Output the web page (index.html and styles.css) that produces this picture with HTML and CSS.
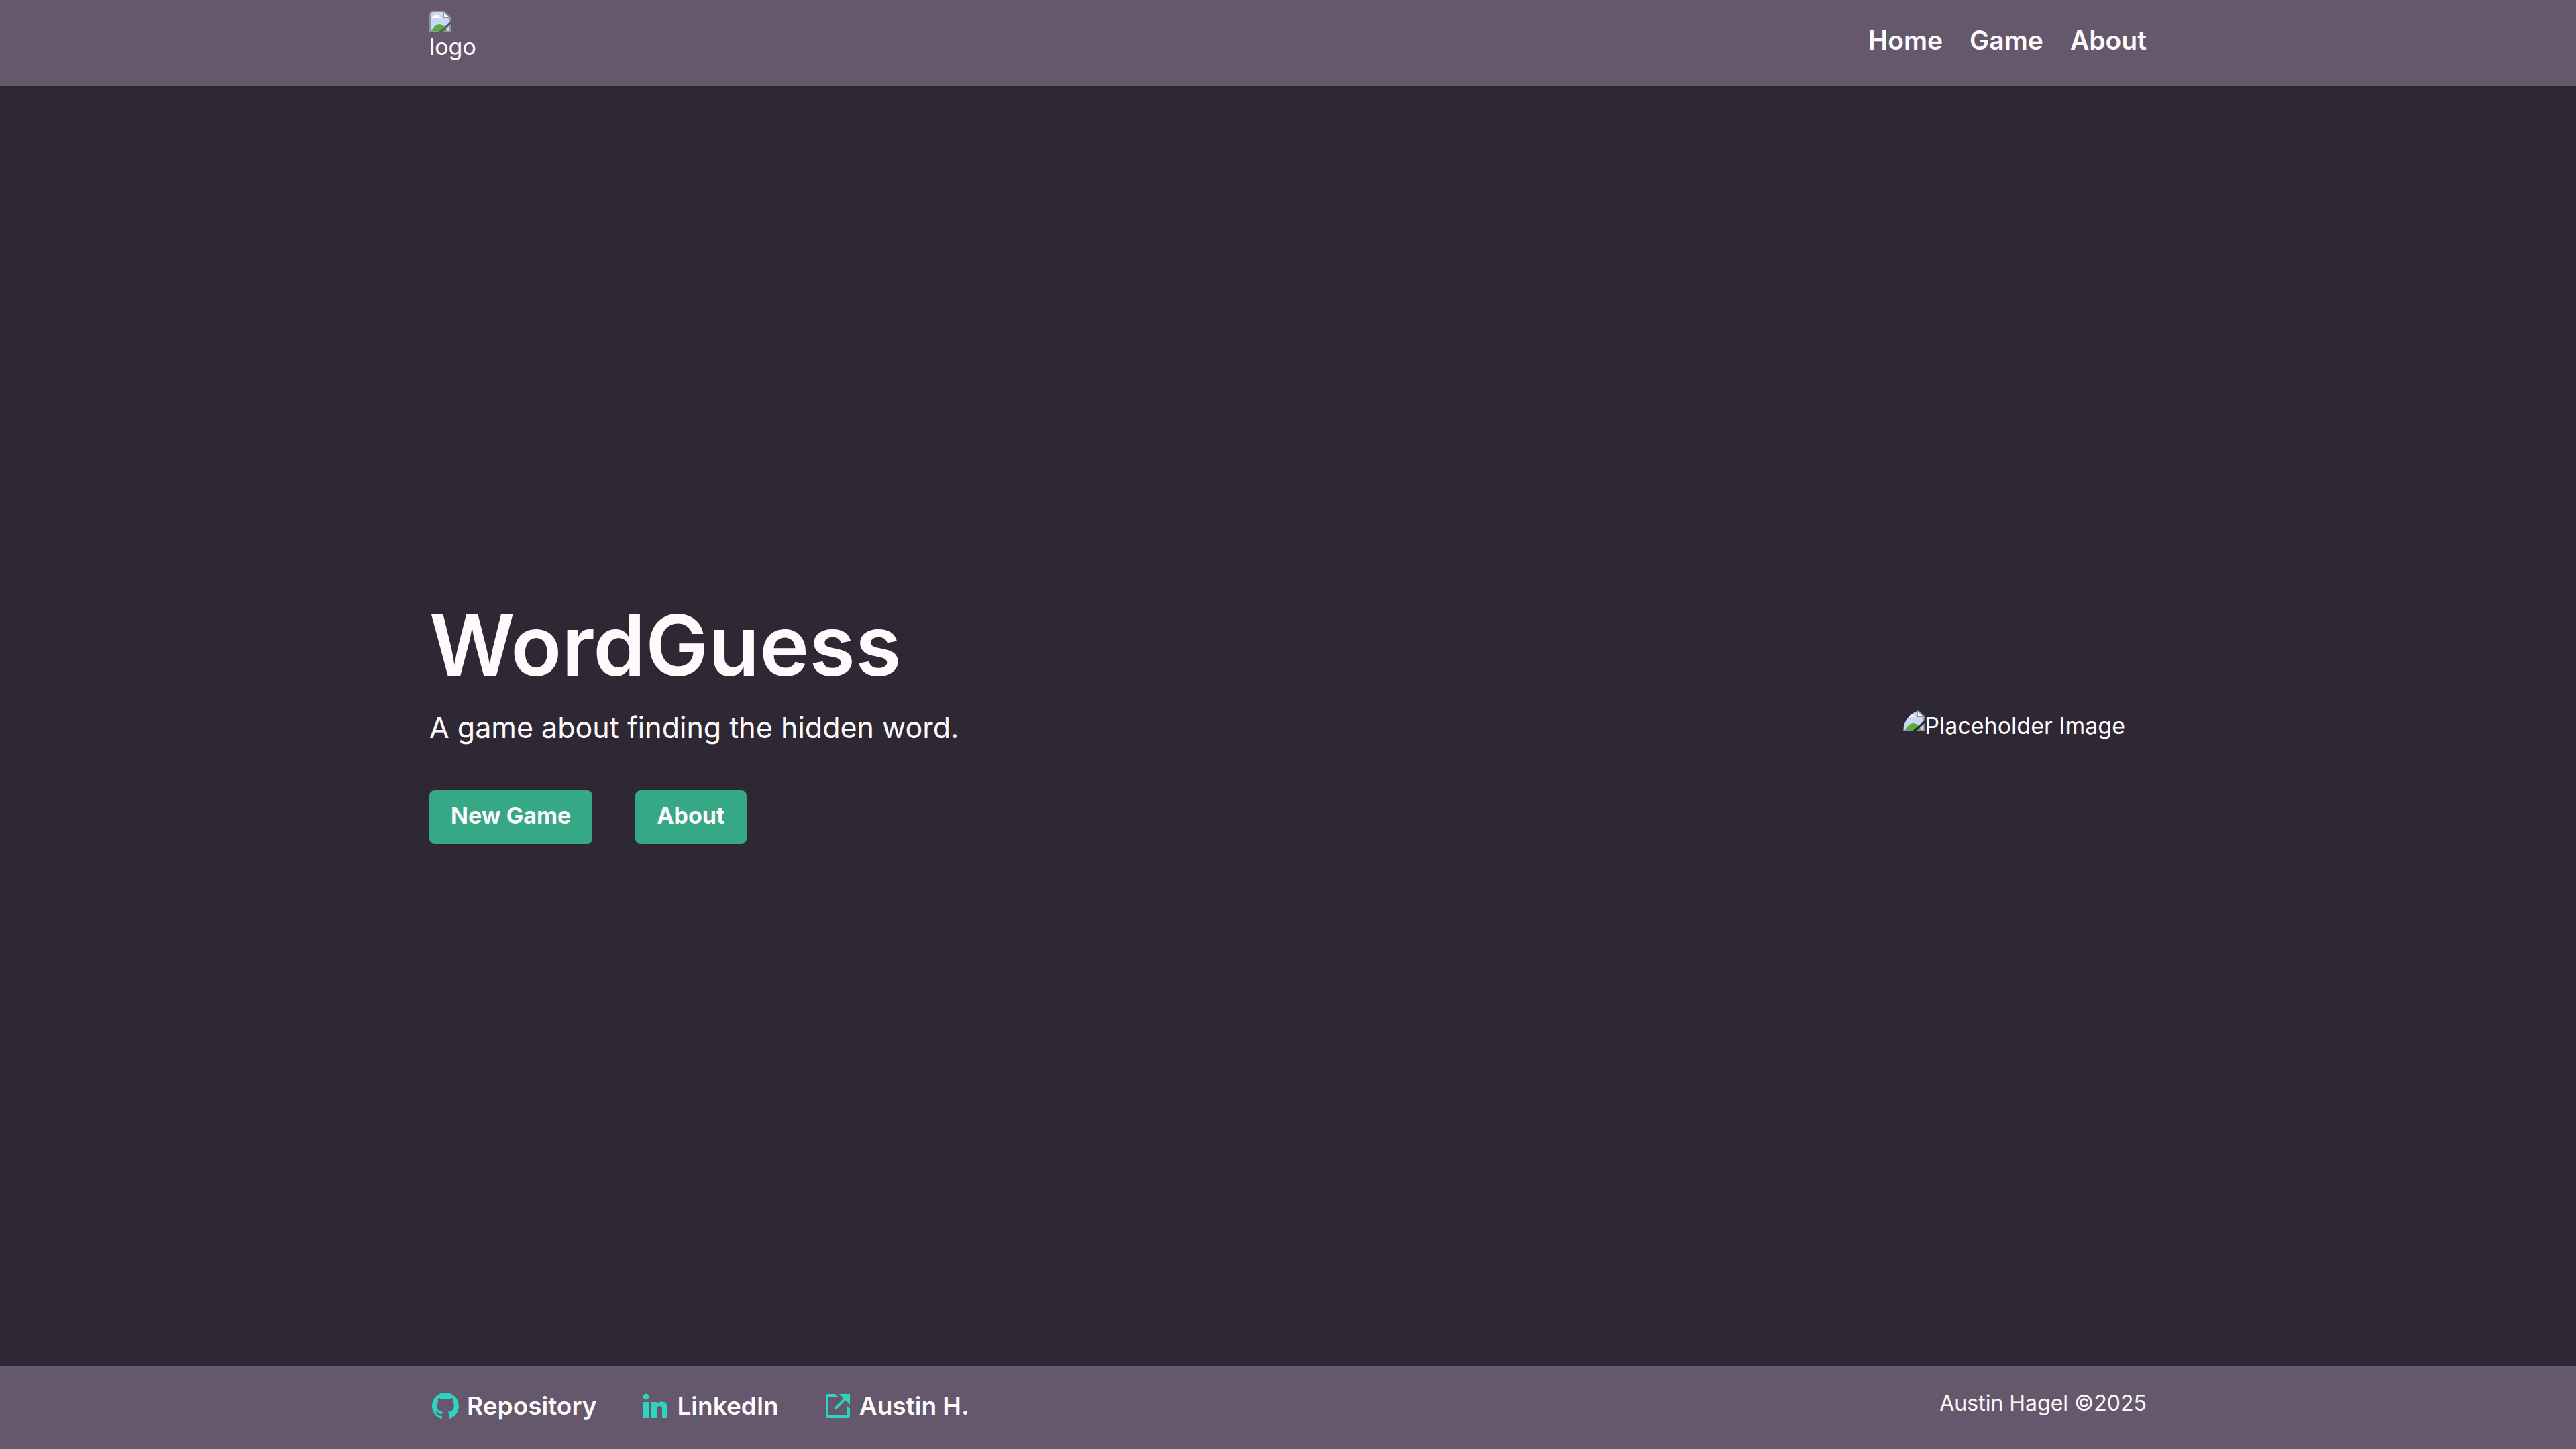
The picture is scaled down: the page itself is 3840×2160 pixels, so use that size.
FILE: index.html
```html
<!DOCTYPE html>
<html lang="en">
<head>
<meta charset="utf-8">
<meta name="viewport" content="width=device-width, initial-scale=1">
<title>WordGuess</title>
<link rel="stylesheet" href="styles.css">
</head>
<body>
<svg class="sprite" aria-hidden="true">
  <symbol id="missing" viewBox="0 0 32 32">
    <path d="M7 1H21L31 10V31H1V7Q1 1 7 1Z" fill="#c6d9f6" stroke="#939393" stroke-width="2"/>
    <path d="M4 11q0-3 3-3 2-3 5-2 3 0 3 3 2 0 2 2z" fill="#fff"/>
    <path d="M3 30Q8 20 15 20T27 30Z" fill="#57ae35"/>
    <path d="M21 1V10H31Z" fill="#fff" stroke="#939393" stroke-width="2"/>
    <path class="tear" d="M32 16V20L19 32H13Z"/>
  </symbol>
</svg>
<header class="bar">
  <div class="container header-row">
    <a class="logo" href="#"><svg class="missing"><use href="#missing"/></svg><span>logo</span></a>
    <nav class="nav">
      <a href="#">Home</a>
      <a href="#">Game</a>
      <a href="#">About</a>
    </nav>
  </div>
</header>
<main class="container hero">
  <section>
    <h1 class="title">WordGuess</h1>
    <p class="tagline">A game about finding the hidden word.</p>
    <div class="actions">
      <button class="button" type="button">New Game</button>
      <button class="button" type="button">About</button>
    </div>
  </section>
  <div class="picture"><svg class="missing"><use href="#missing"/></svg><span>Placeholder Image</span></div>
</main>
<footer class="bar">
  <div class="container footer-row">
    <div class="links">
      <a href="#"><svg class="icon" viewBox="0 0 24 24"><path d="M12 2A10 10 0 0 0 2 12c0 4.42 2.87 8.17 6.84 9.5.5.08.66-.23.66-.5v-1.69c-2.77.6-3.36-1.34-3.36-1.34-.46-1.16-1.11-1.47-1.11-1.47-.91-.62.07-.6.07-.6 1 .07 1.53 1.03 1.53 1.03.87 1.52 2.34 1.07 2.91.83.09-.65.35-1.09.63-1.34-2.22-.25-4.55-1.11-4.55-4.92 0-1.11.38-2 1.03-2.71-.1-.25-.45-1.29.1-2.64 0 0 .84-.27 2.75 1.02.79-.22 1.65-.33 2.5-.33s1.71.11 2.5.33c1.91-1.29 2.75-1.02 2.75-1.02.55 1.35.2 2.39.1 2.64.65.71 1.03 1.6 1.03 2.71 0 3.82-2.34 4.66-4.57 4.91.36.31.69.92.69 1.85V21c0 .27.16.59.67.5C19.14 20.16 22 16.42 22 12A10 10 0 0 0 12 2Z"/></svg>Repository</a>
      <a href="#"><svg class="icon" viewBox="0 0 24 24"><circle cx="5" cy="5" r="2.2"/><path d="M3 9h4v12H3zM9 9h4v1.700C13.600 9.700 14.900 8.700 16.700 8.700 20.200 8.700 21 11 21 14.200V21h-4v-6c0-1.500 0-3-1.900-3S13 13.500 13 15v6H9z"/></svg>LinkedIn</a>
      <a href="#"><svg class="icon" viewBox="0 0 24 24"><path d="M10 3H4.500A1.500 1.500 0 0 0 3 4.500v15A1.500 1.500 0 0 0 4.500 21h15a1.500 1.500 0 0 0 1.500-1.500V14l-2-2v7H5V5h7zM13 3h8v8l-3.300-3.300-7 7-1.400-1.400 7-7z"/></svg>Austin H.</a>
    </div>
    <p class="copyright">Austin Hagel ©2025</p>
  </div>
</footer>
</body>
</html>
```
FILE: styles.css
```css
* { box-sizing: border-box; margin: 0; }
body {
  min-height: 100vh;
  display: flex;
  flex-direction: column;
  background: #2e2835;
  color: #fffbfc;
  font: 34px/48px Inter, sans-serif;
}
a { color: inherit; text-decoration: none; }
.sprite { position: absolute; width: 0; height: 0; }
.bar { background: #65586d; --surface: #65586d; }
.container { width: 100%; padding: 0 16.667%; }
.header-row, .footer-row, .hero { display: flex; justify-content: space-between; }
.header-row { min-height: 128px; }
.missing { width: 32px; height: 32px; flex: none; }
.tear { fill: var(--surface, #2e2835); }
.logo { display: flex; flex-direction: column; padding-top: 16px; line-height: 44px; }
.nav { display: flex; gap: 40px; padding-top: 36px; font-size: 39px; font-weight: 600; }
.hero { flex: 1; align-items: center; }
.title { font-size: 125px; line-height: 112px; font-weight: 600; }
.tagline { font-size: 43px; line-height: 64px; margin: 34px 0 62px; }
.actions { display: flex; gap: 64px; }
.button {
  height: 80px;
  padding: 0 32px 4px;
  border: 0;
  border-radius: 8px;
  background: #37a885;
  color: inherit;
  font: 700 34px/48px Inter, sans-serif;
}
.picture { display: flex; align-items: flex-start; padding-right: 32px; }
.picture .missing { border-radius: 32px 0 0 0; }
.footer-row { min-height: 124px; padding-top: 36px; }
.links { display: flex; gap: 64px; font-size: 37px; font-weight: 600; }
.links a { display: flex; gap: 8px; height: 48px; }
.icon { width: 48px; height: 48px; fill: #2dd4bf; }
.copyright { font-size: 32px; line-height: 40px; }
```
